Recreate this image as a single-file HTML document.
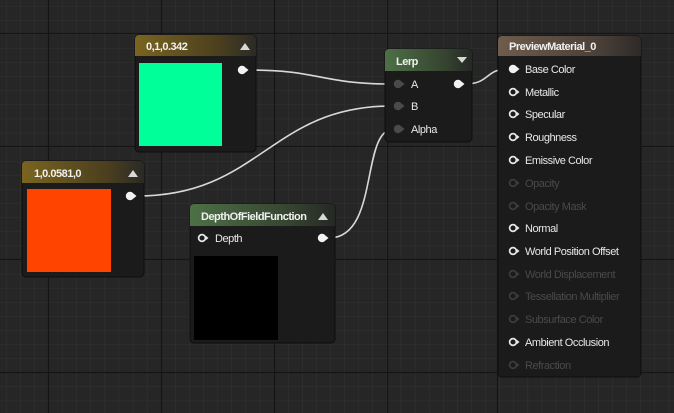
<!DOCTYPE html>
<html><head><meta charset="utf-8"><style>
html,body{margin:0;padding:0;background:#262626;overflow:hidden}
svg{display:block}
text{font-family:"Liberation Sans",sans-serif;font-size:11px;fill:#e8e8e8;letter-spacing:-0.45px}
.h{font-weight:bold;font-size:11px;fill:#f0f0f0;letter-spacing:-0.5px}
.d{fill:#4a4a4a}
</style></head><body>
<svg width="674" height="413" xmlns="http://www.w3.org/2000/svg">
<defs>
<pattern id="g" x="5.9" y="5.9" width="14.1" height="14.1" patternUnits="userSpaceOnUse">
<path d="M0 0H14.1M0 0V14.1" stroke="#333" stroke-width="1" fill="none"/>
</pattern>
<linearGradient id="gold" x1="0" x2="1"><stop offset="0" stop-color="#7a6420"/><stop offset="0.7" stop-color="#4a3f1e"/><stop offset="1" stop-color="#2a2a26"/></linearGradient>
<linearGradient id="grn" x1="0" x2="1"><stop offset="0" stop-color="#4d7046"/><stop offset="0.7" stop-color="#35432f"/><stop offset="1" stop-color="#262826"/></linearGradient>
<linearGradient id="brn" x1="0" x2="1"><stop offset="0" stop-color="#6e5c4c"/><stop offset="0.7" stop-color="#4b4038"/><stop offset="1" stop-color="#2e2a28"/></linearGradient>
<g id="pf"><circle cx="0" cy="0" r="4.2" fill="#f2f2f2"/><path d="M3.5 -2.5L6.5 0L3.5 2.5Z" fill="#f2f2f2"/></g>
<g id="po"><circle cx="0" cy="0" r="3.4" fill="none" stroke="#e8e8e8" stroke-width="1.7"/><path d="M3.8 -2.3L6.5 0L3.8 2.3Z" fill="#e8e8e8"/></g>
<g id="pd"><circle cx="0" cy="0" r="3.4" fill="none" stroke="#3c3c3c" stroke-width="1.7"/><path d="M3.8 -2.3L6.5 0L3.8 2.3Z" fill="#3c3c3c"/></g>
<g id="pg"><circle cx="0" cy="0" r="4.2" fill="#4a4a4a"/><path d="M3.5 -2.5L6.5 0L3.5 2.5Z" fill="#4a4a4a"/></g>
</defs>
<rect width="674" height="413" fill="#262626"/>
<rect width="674" height="413" fill="url(#g)"/>
<g stroke="#151515" stroke-width="1.2">
<path d="M48.5 0V413M161.5 0V413M274.5 0V413M387.5 0V413M497.5 0V413M0 33.5H674M0 146.5H674M0 259.5H674M0 372.5H674"/>
</g>
<g stroke="#d8d8d8" stroke-width="1.6" fill="none">
<path d="M249 70C320 70 320 84 392 84"/>
<path d="M137 196C260 196 270 106 392 106"/>
<path d="M329 238C380 238 360 129 394 129"/>
<path d="M465 84C490 84 485 69 508 69"/>
</g>
<g>
<rect x="135" y="35" width="121" height="117" rx="4" fill="#1b1b1b" stroke="#0e0e0e"/>
<path d="M139 35H252a4 4 0 0 1 4 4V56H135V39a4 4 0 0 1 4-4Z" fill="url(#gold)"/>
<text x="146" y="50" class="h">0,1,0.342</text>
<path d="M240 50L245 43L250 50Z" fill="#d8d8d8"/>
<rect x="139" y="63" width="83" height="83" fill="#00ff99"/>
<use href="#pf" x="242" y="70"/>
</g>
<g>
<rect x="22" y="161" width="122" height="116" rx="4" fill="#1b1b1b" stroke="#0e0e0e"/>
<path d="M26 161H140a4 4 0 0 1 4 4V183H22V165a4 4 0 0 1 4-4Z" fill="url(#gold)"/>
<text x="34" y="177" class="h">1,0.0581,0</text>
<path d="M128 177L133 170L138 177Z" fill="#d8d8d8"/>
<rect x="27" y="189" width="84" height="83" fill="#ff4400"/>
<use href="#pf" x="130" y="196"/>
</g>
<g>
<rect x="385" y="49" width="87" height="93" rx="4" fill="#1b1b1b" stroke="#0e0e0e"/>
<path d="M389 49H468a4 4 0 0 1 4 4V71H385V53a4 4 0 0 1 4-4Z" fill="url(#grn)"/>
<text x="396" y="65" class="h">Lerp</text>
<path d="M457 57L467 57L462 63Z" fill="#d8d8d8"/>
<use href="#pg" x="398" y="84"/><text x="411" y="88">A</text>
<use href="#pg" x="398" y="106"/><text x="411" y="110">B</text>
<use href="#pg" x="398" y="129"/><text x="411" y="133">Alpha</text>
<use href="#pf" x="458" y="84"/>
</g>
<g>
<rect x="190" y="204" width="145" height="139" rx="4" fill="#1b1b1b" stroke="#0e0e0e"/>
<path d="M194 204H331a4 4 0 0 1 4 4V226H190V208a4 4 0 0 1 4-4Z" fill="url(#grn)"/>
<text x="201" y="220" class="h">DepthOfFieldFunction</text>
<path d="M318 220L323 213L328 220Z" fill="#d8d8d8"/>
<use href="#po" x="202" y="238"/><text x="215" y="242">Depth</text>
<use href="#pf" x="322" y="238"/>
<rect x="194" y="256" width="84" height="84" fill="#000"/>
</g>
<g>
<rect x="498" y="36" width="143" height="341" rx="4" fill="#1b1b1b" stroke="#0e0e0e"/>
<path d="M502 36H637a4 4 0 0 1 4 4V56H498V40a4 4 0 0 1 4-4Z" fill="url(#brn)"/>
<text x="509" y="50" class="h">PreviewMaterial_0</text>
<use href="#pf" x="513" y="69"/><text x="525" y="73">Base Color</text>
<use href="#po" x="513" y="92"/><text x="525" y="96">Metallic</text>
<use href="#po" x="513" y="114"/><text x="525" y="118">Specular</text>
<use href="#po" x="513" y="137"/><text x="525" y="141">Roughness</text>
<use href="#po" x="513" y="160"/><text x="525" y="164">Emissive Color</text>
<use href="#pd" x="513" y="183"/><text x="525" y="187" class="d">Opacity</text>
<use href="#pd" x="513" y="206"/><text x="525" y="210" class="d">Opacity Mask</text>
<use href="#po" x="513" y="228"/><text x="525" y="232">Normal</text>
<use href="#po" x="513" y="251"/><text x="525" y="255">World Position Offset</text>
<use href="#pd" x="513" y="274"/><text x="525" y="278" class="d">World Displacement</text>
<use href="#pd" x="513" y="296"/><text x="525" y="300" class="d">Tessellation Multiplier</text>
<use href="#pd" x="513" y="319"/><text x="525" y="323" class="d">Subsurface Color</text>
<use href="#po" x="513" y="342"/><text x="525" y="346">Ambient Occlusion</text>
<use href="#pd" x="513" y="365"/><text x="525" y="369" class="d">Refraction</text>
</g>
</svg>
</body></html>
